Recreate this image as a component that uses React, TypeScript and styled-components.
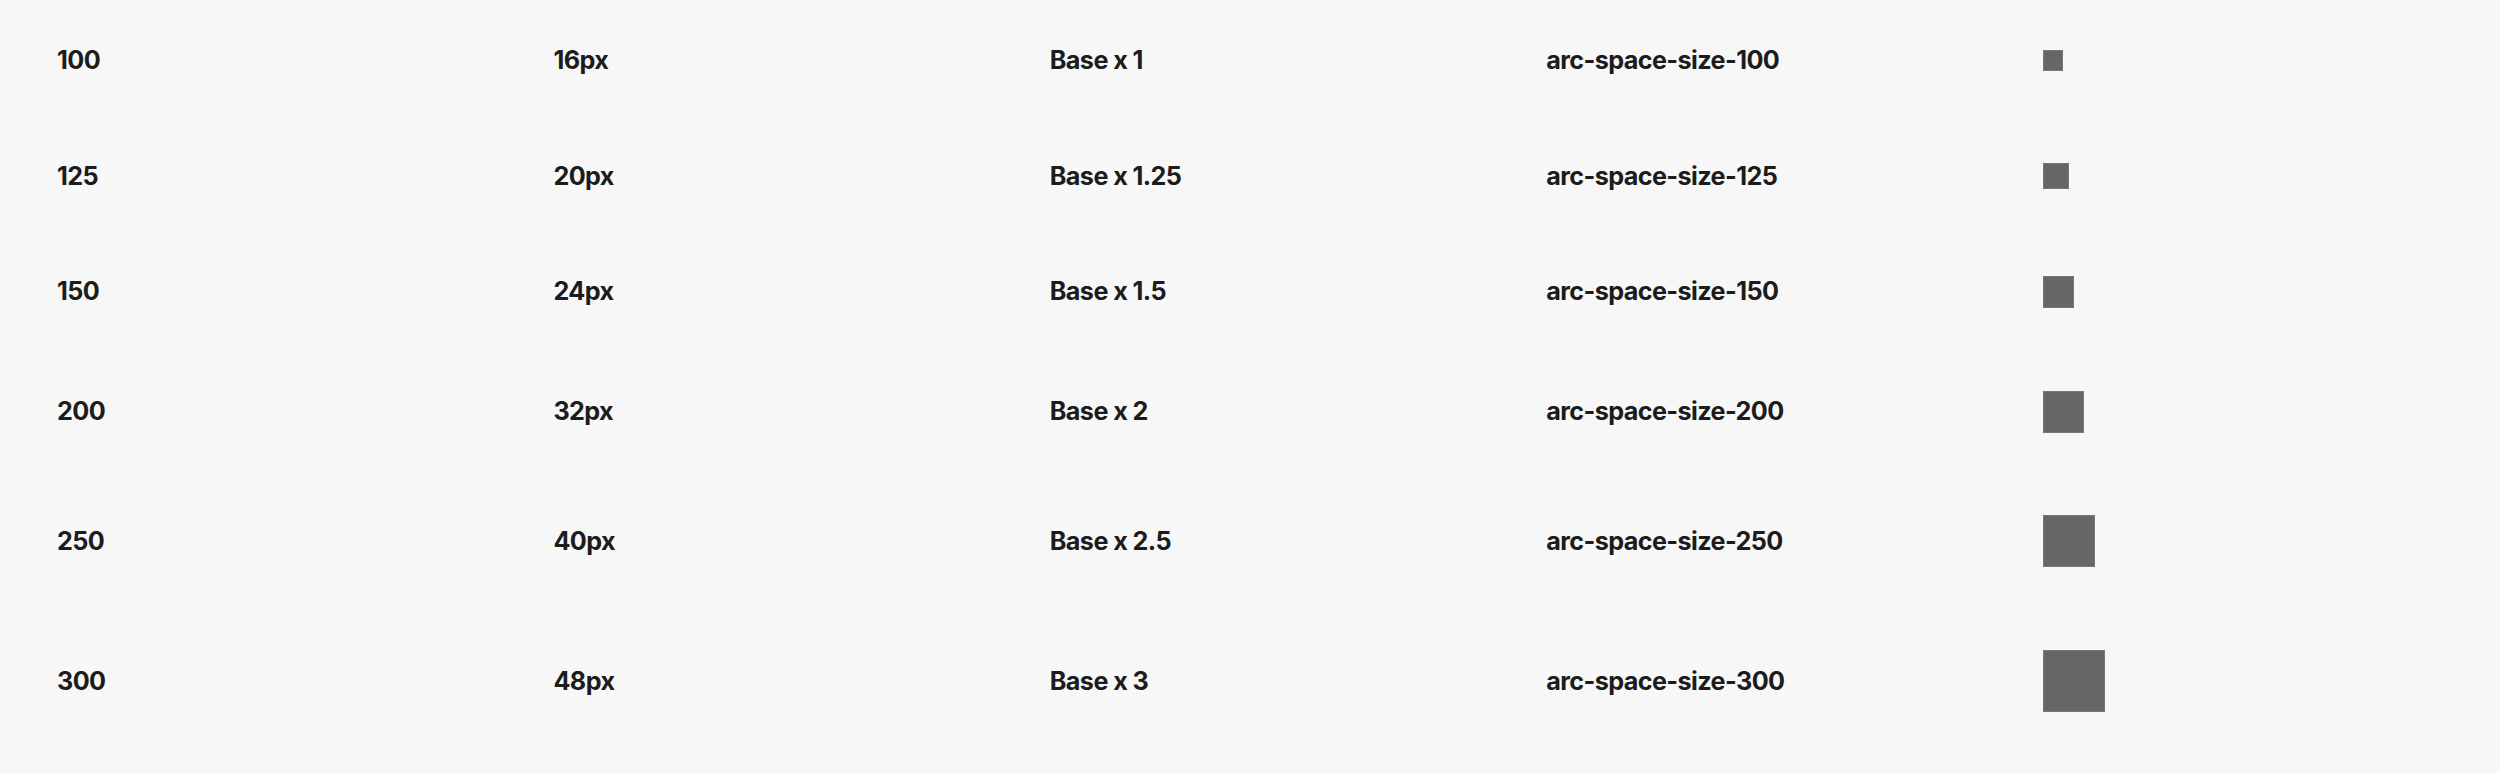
import React from "react";
import styled, { createGlobalStyle } from "styled-components";

const GlobalStyle = createGlobalStyle`
  html, body {
    margin: 0;
    padding: 0;
    background: #f7f7f7;
  }
  body {
    font-family: Inter, "Noto Sans", sans-serif;
    color: #1c1c1c;
  }
`;

const Page = styled.div`
  padding: 3px 9px 0;
  background: #f7f7f7;
`;

const Table = styled.table`
  width: 100%;
  border-collapse: collapse;
  table-layout: fixed;
`;

const Row = styled.tr``;

const Cell = styled.td`
  padding: 41.3px 48px;
  vertical-align: middle;
  font-family: Inter, "Noto Sans", sans-serif;
  font-weight: 700;
  font-size: 25.2px;
  letter-spacing: -0.6px;
  line-height: 33px;
  color: #1c1c1c;
  white-space: nowrap;
`;

const Swatch = styled.div<{ $size: number }>`
  width: ${(p) => p.$size}px;
  height: ${(p) => p.$size}px;
  background: #666666;
  border: 1px solid #777777;
  box-sizing: border-box;
  display: block;
`;

type Token = { step: string; px: number; mult: string };

const tokens: Token[] = [
  { step: "100", px: 16, mult: "1" },
  { step: "125", px: 20, mult: "1.25" },
  { step: "150", px: 24, mult: "1.5" },
  { step: "200", px: 32, mult: "2" },
  { step: "250", px: 40, mult: "2.5" },
  { step: "300", px: 48, mult: "3" },
];

export default function App() {
  return (
    <>
      <GlobalStyle />
      <Page>
        <Table>
          <tbody>
            {tokens.map((t) => (
              <Row key={t.step}>
                <Cell>{t.step}</Cell>
                <Cell>{t.px}px</Cell>
                <Cell>Base x {t.mult}</Cell>
                <Cell>arc-space-size-{t.step}</Cell>
                <Cell>
                  <Swatch $size={t.px * 1.3} />
                </Cell>
              </Row>
            ))}
          </tbody>
        </Table>
      </Page>
    </>
  );
}
